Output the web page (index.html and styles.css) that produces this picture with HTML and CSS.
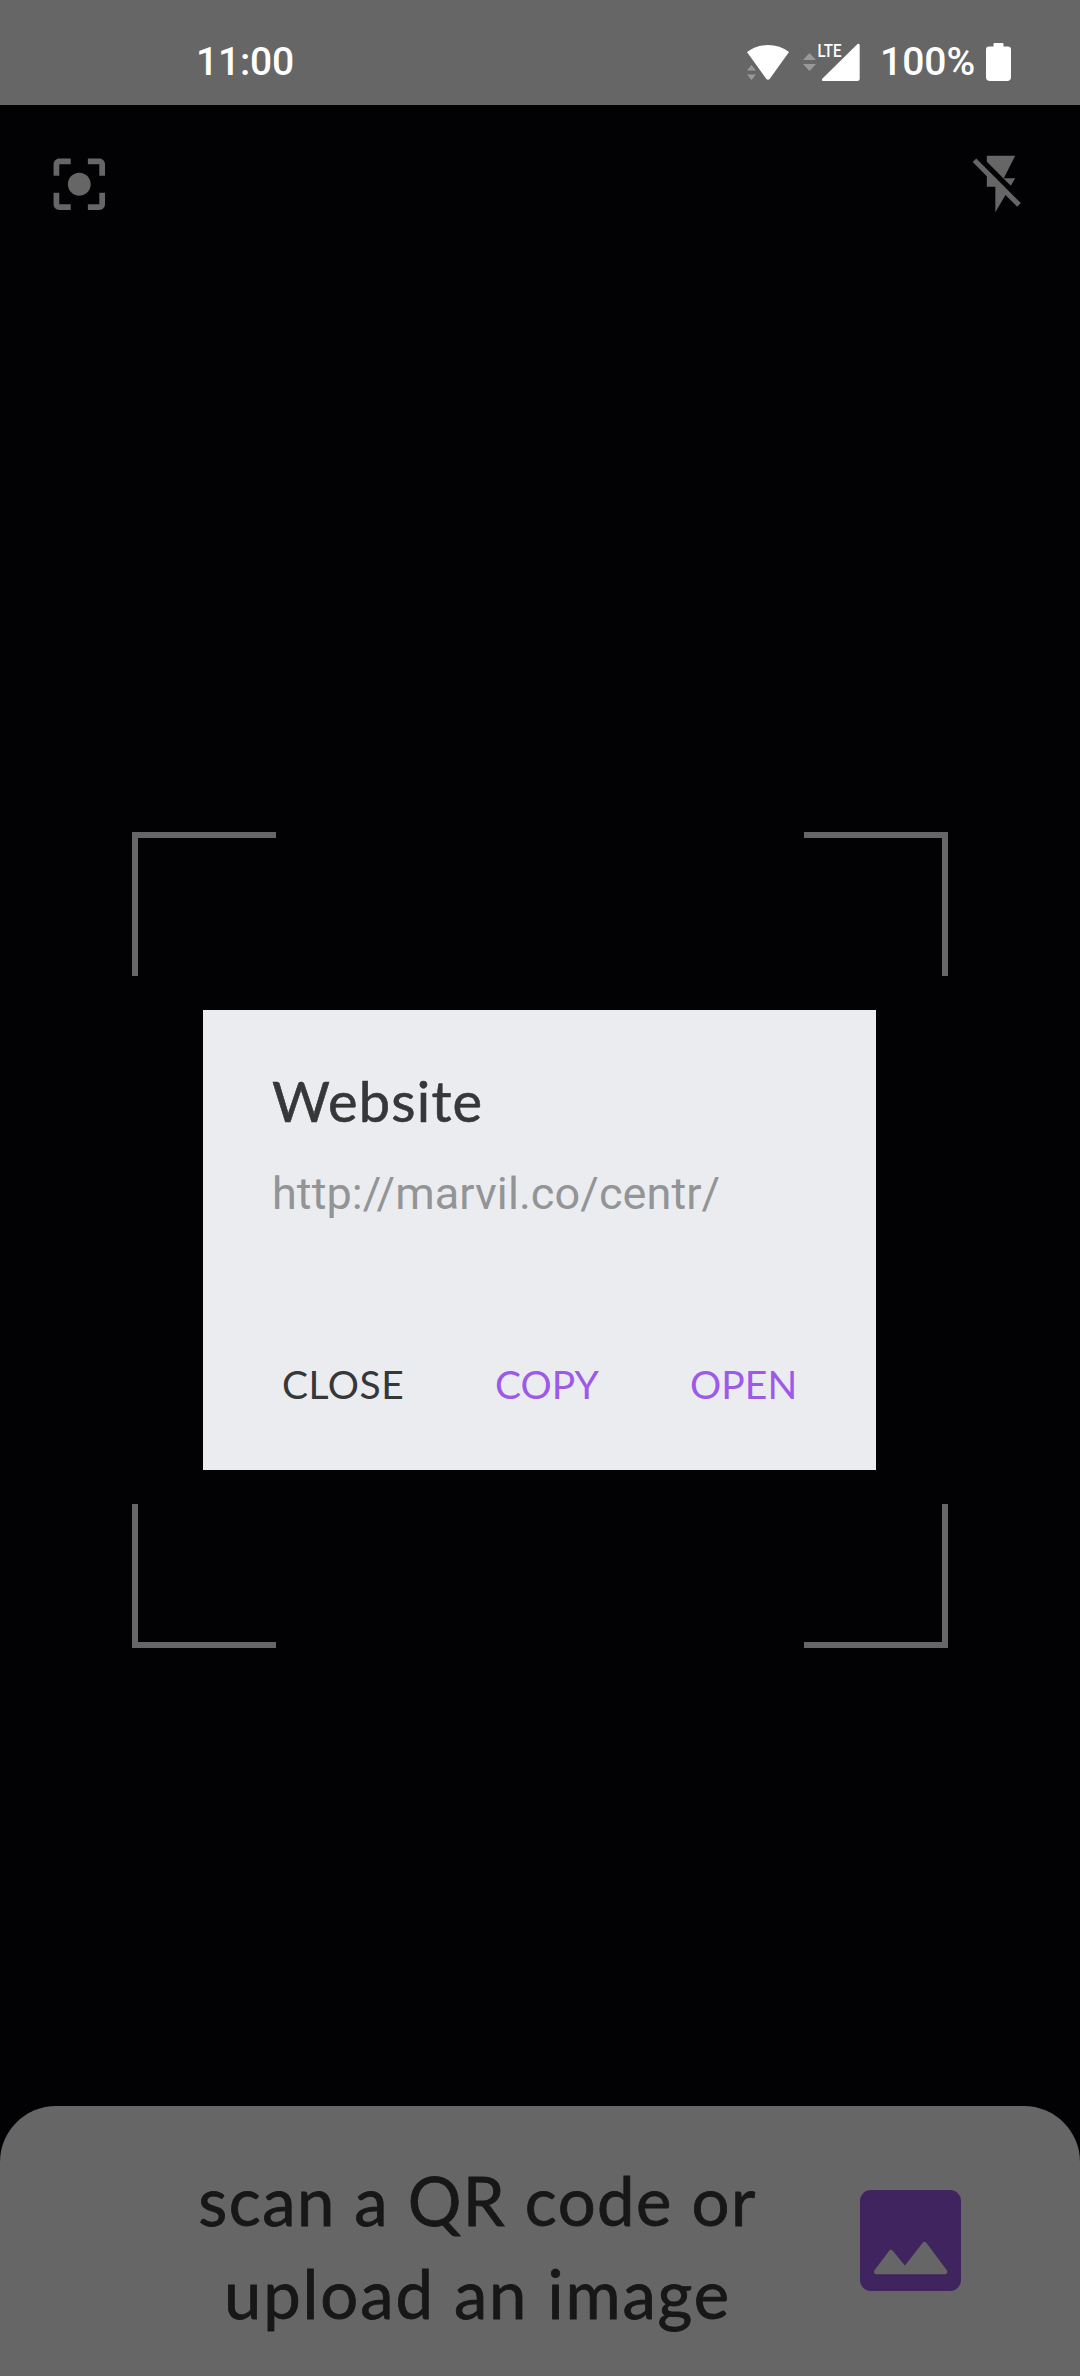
FILE: index.html
```
<!DOCTYPE html>
<html lang="en">
<head>
<meta charset="utf-8">
<title>QR scanner</title>
<link rel="stylesheet" href="styles.css">
</head>
<body>
<div class="screen">
  <header class="status-bar">
    <span class="clock">11:00</span>
    <div class="indicators">
      <svg class="network" width="113" height="43" viewBox="0 -4 113 43">
        <path fill="#fff" d="M0 9Q9 2 21 2T42 9L23 35.500Q21 38 19 35.500Z"/>
        <path fill="#999" d="M0 27.500 4.500 22 9 27.500ZM0 31.500H9L4.500 37Z"/>
        <path fill="#999" d="M56 17 62.500 10 69 17ZM56 21H69L62.500 28Z"/>
        <path fill="#fff" d="M112.700 2V35.500Q112.700 38 110.200 38H76Q74 37.500 75.500 35.500L110.500 1Q112.300 0 112.700 2Z"/>
        <text class="lte" x="70.500" y="14.200" textLength="24" lengthAdjust="spacingAndGlyphs">LTE</text>
      </svg>
      <span class="charge">100%</span>
      <svg class="battery" width="25" height="38" viewBox="0 0 25 38">
        <path fill="#fff" d="M8.500 0H16.500Q17.500 0 17.500 1V3.500H22Q25 3.500 25 6.500V34Q25 38 21 38H4Q0 38 0 34V6.500Q0 3.500 3 3.500H7.500V1Q7.500 0 8.500 0Z"/>
      </svg>
    </div>
  </header>

  <main class="camera">
    <nav class="tools">
      <svg width="68.600" height="68.600" viewBox="0 0 24 24"><path fill="#666" d="M12 8c-2.210 0-4 1.790-4 4s1.790 4 4 4 4-1.790 4-4-1.790-4-4-4zm-7 7H3v4c0 1.100.9 2 2 2h4v-2H5v-4zM5 5h4V3H5c-1.100 0-2 .9-2 2v4h2V5zm14-2h-4v2h4v4h2V5c0-1.100-.9-2-2-2zm0 16h-4v2h4c1.100 0 2-.9 2-2v-4h-2v4z"/></svg>
      <svg width="68" height="68" viewBox="0 0 24 24"><path fill="#666" d="M3.270 3L2 4.270l5 5V13h3v9l3.580-6.140L17.730 20 19 18.730 3.270 3zM17 10h-4l4-8H7v2.180l8.460 8.460L17 10z"/></svg>
    </nav>
    <div class="finder">
      <i class="corner tl"></i><i class="corner tr"></i>
      <section class="dialog">
        <h1>Website</h1>
        <p>http://marvil.co/centr/</p>
        <div class="actions">
          <span class="close">CLOSE</span>
          <span class="copy">COPY</span>
          <span class="open">OPEN</span>
        </div>
      </section>
      <i class="corner bl"></i><i class="corner br"></i>
    </div>
  </main>

  <footer class="sheet">
    <div class="hint"><div class="line-one">scan a QR code or</div><div class="line-two">upload an image</div></div>
    <svg class="gallery" width="101" height="101" viewBox="0 0 101 101">
      <rect width="101" height="101" rx="11" fill="#402460"/>
      <path fill="#666" stroke="#666" stroke-width="5" stroke-linejoin="round" d="M16.500 81.800 31 62.500 45 79.500 64.500 54.500 84.800 81.800Z"/>
    </svg>
  </footer>
</div>
</body>
</html>
```
FILE: styles.css
```
* { box-sizing: border-box; }
body { margin: 0; background: #020104; }
svg { display: block; flex: none; }

.screen {
  width: 1080px;
  height: 2376px;
  display: flex;
  flex-direction: column;
  font-family: Lato, "Open Sans", sans-serif;
  background: #020104;
}

.status-bar {
  height: 105px;
  flex: none;
  padding: 39px 69px 0 196px;
  display: flex;
  justify-content: space-between;
  align-items: flex-start;
  background: #666;
  color: #fff;
  font: 500 39px/46px Roboto, sans-serif;
}
.clock { letter-spacing: -.2px; }
.indicators { display: flex; align-items: flex-start; }
.network { overflow: visible; }
.lte { font: 500 18.500px Roboto, sans-serif; fill: #fff; }
.charge { margin-left: 20px; width: 106px; }
.battery { margin-top: 4px; }

.camera {
  flex: 1;
  display: flex;
  flex-direction: column;
}
.tools {
  height: 727px;
  padding: 45px 45px 0;
  display: flex;
  justify-content: space-between;
}

.finder {
  width: 816px;
  height: 816px;
  margin: 0 auto;
  display: grid;
  grid-template-columns: 144px 1fr 144px;
  grid-template-rows: 144px 34px 460px 34px 144px;
}
.corner { border: 0 solid #666; }
.tl { grid-area: 1 / 1; border-width: 6px 0 0 6px; }
.tr { grid-area: 1 / 3; border-width: 6px 6px 0 0; }
.bl { grid-area: 5 / 1; border-width: 0 0 6px 6px; }
.br { grid-area: 5 / 3; border-width: 0 6px 6px 0; }

.dialog {
  grid-area: 3 / 1 / 4 / 4;
  width: 673px;
  height: 460px;
  margin-left: 71px;
  padding: 53px 69px 0;
  background: #ebecf0;
}
.dialog h1 {
  margin: 0;
  font-size: 56px;
  font-weight: 400;
  line-height: 76px;
  letter-spacing: 1.200px;
  color: #363738;
  -webkit-text-stroke: .6px #363738;
}
.dialog p {
  margin: 25px 0 0;
  font: 400 45px/60px Roboto, sans-serif;
  letter-spacing: .08px;
  color: #939496;
}
.actions {
  margin-top: 137px;
  padding-left: 10px;
  display: flex;
  font-size: 39px;
  line-height: 47px;
  color: #9d5ae9;
}
.close { width: 213px; letter-spacing: .5px; color: #363738; }
.copy { width: 195px; }
.open { letter-spacing: .1px; }

.sheet {
  height: 270px;
  flex: none;
  padding: 48px 119px 0 197px;
  display: flex;
  justify-content: space-between;
  border-radius: 56px 56px 0 0;
  background: #666;
}
.hint {
  width: 561px;
  text-align: center;
  white-space: nowrap;
  font-size: 67px;
  line-height: 93px;
  color: #171717;
  -webkit-text-stroke: .8px #171717;
}
.line-one { letter-spacing: 1.450px; }
.line-two { letter-spacing: 1.900px; }
.gallery { margin-top: 36px; }
```
